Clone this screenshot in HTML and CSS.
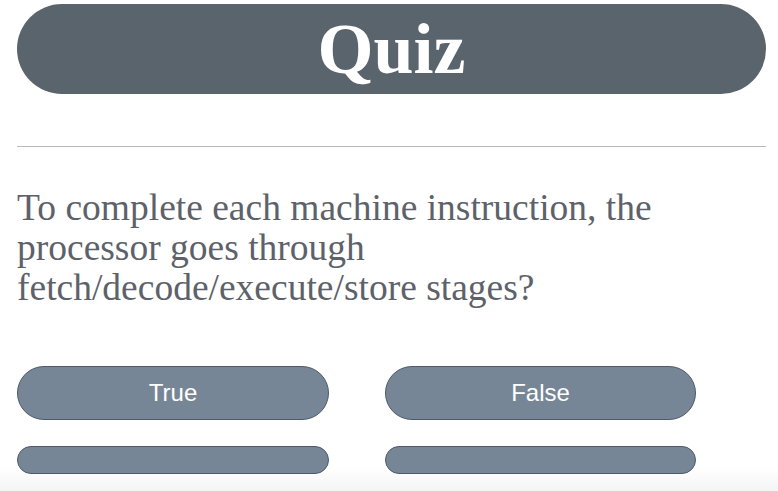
FILE: index.html
```html
<!DOCTYPE html>
<html>
<head>
<meta charset="utf-8">
<link rel="stylesheet" href="styles.css">
</head>
<body>
<div class="page">
  <header class="title-bar"><h1 class="title">Quiz</h1></header>
  <hr class="divider">
  <p class="question">To complete each machine instruction, the processor goes through fetch/decode/execute/store stages?</p>
  <div class="answers">
    <button class="answer">True</button>
    <button class="answer">False</button>
    <button class="answer small"></button>
    <button class="answer small"></button>
  </div>
</div>
</body>
</html>
```

FILE: styles.css
```css
html, body {
  margin: 0;
  padding: 0;
  overflow: hidden;
}
body {
  background: linear-gradient(to bottom, #ffffff 0, #ffffff 468px, #f4f4f4 491px);
  height: 491px;
}
.page {
  padding: 4px 12px 0 17px;
  height: 491px;
  box-sizing: border-box;
}
.title-bar {
  height: 90px;
  background: #5a646d;
  border-radius: 45px;
  display: flex;
  align-items: center;
  justify-content: center;
}
.title {
  margin: 0;
  font-family: "Liberation Serif", "Times New Roman", serif;
  font-weight: bold;
  font-size: 72px;
  line-height: 1;
  color: #ffffff;
}
.divider {
  margin: 52px 0 0 0;
  border: 0;
  height: 1px;
  background: #b8b8b8;
}
.question {
  margin: 41px 0 0 0;
  font-family: "Liberation Serif", "Times New Roman", serif;
  font-size: 37.5px;
  line-height: 40px;
  color: #5d626a;
}
.answers {
  margin-top: 58px;
  display: grid;
  grid-template-columns: 312px 311px;
  column-gap: 56px;
  row-gap: 26px;
}
.answer {
  height: 54px;
  border-radius: 27px;
  background: #778696;
  border: 1px solid #4c5a6a;
  color: #ffffff;
  font-family: "Liberation Sans", Arial, sans-serif;
  font-size: 24px;
  padding: 0;
}
.answer.small {
  height: 28px;
  border-radius: 14px;
}
```
